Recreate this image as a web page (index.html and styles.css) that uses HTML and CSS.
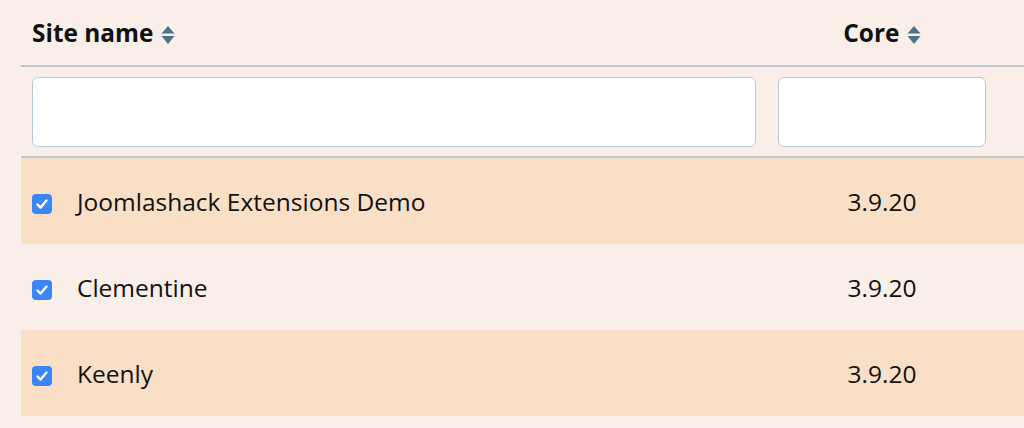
FILE: index.html
```html
<!DOCTYPE html>
<html>
<head>
<meta charset="utf-8">
<link rel="stylesheet" href="styles.css">
</head>
<body>
<div class="wrap">
<table class="sites">
  <colgroup>
    <col class="c-name">
    <col class="c-core">
    <col class="c-rest">
  </colgroup>
  <thead>
    <tr class="head">
      <th class="th-name">Site name <svg class="sort" viewBox="0 0 14 18" width="14" height="18"><path d="M7 0 L13.5 7.5 H0.5 Z M0.5 10 H13.5 L7 18 Z" fill="#4b7587"/></svg></th>
      <th class="th-core">Core <svg class="sort" viewBox="0 0 14 18" width="14" height="18"><path d="M7 0 L13.5 7.5 H0.5 Z M0.5 10 H13.5 L7 18 Z" fill="#4b7587"/></svg></th>
      <th></th>
    </tr>
    <tr class="filters">
      <th><input class="filter filter-name" type="text"></th>
      <th><input class="filter filter-core" type="text"></th>
      <th></th>
    </tr>
  </thead>
  <tbody>
    <tr class="odd">
      <td class="name"><span class="cb"><svg viewBox="0 0 20 20" width="20" height="20"><path d="M5.5 10.5 L8.6 13.6 L14.5 6.6" fill="none" stroke="#fff" stroke-width="2.4" stroke-linecap="round" stroke-linejoin="round"/></svg></span>Joomlashack Extensions Demo</td>
      <td class="core">3.9.20</td>
      <td></td>
    </tr>
    <tr>
      <td class="name"><span class="cb"><svg viewBox="0 0 20 20" width="20" height="20"><path d="M5.5 10.5 L8.6 13.6 L14.5 6.6" fill="none" stroke="#fff" stroke-width="2.4" stroke-linecap="round" stroke-linejoin="round"/></svg></span>Clementine</td>
      <td class="core">3.9.20</td>
      <td></td>
    </tr>
    <tr class="odd">
      <td class="name"><span class="cb"><svg viewBox="0 0 20 20" width="20" height="20"><path d="M5.5 10.5 L8.6 13.6 L14.5 6.6" fill="none" stroke="#fff" stroke-width="2.4" stroke-linecap="round" stroke-linejoin="round"/></svg></span>Keenly</td>
      <td class="core">3.9.20</td>
      <td></td>
    </tr>
  </tbody>
</table>
</div>
</body>
</html>
```
FILE: styles.css
```css
html, body {
  margin: 0;
  padding: 0;
  background: #f9eee8;
  overflow: hidden;
}
body {
  font-family: "Open Sans", "Noto Sans", sans-serif;
  color: #111;
}
.wrap {
  padding-left: 21px;
}
.sites {
  border-collapse: collapse;
  width: 100%;
  table-layout: fixed;
}
.c-name { width: 746px; }
.c-core { width: 230px; }
.head th {
  height: 65px;
  padding: 0 11px;
  font-size: 24.4px;
  font-weight: 700;
  vertical-align: middle;
  border-bottom: 2px solid #b9cad3;
}
.th-name { text-align: left; }
.th-core { text-align: center; }
.sort {
  vertical-align: -2px;
  margin-left: 1px;
}
.filters th {
  padding: 10px 11px 9px;
  border-bottom: 2px solid #b9cad3;
}
.filter {
  display: block;
  box-sizing: border-box;
  width: 100%;
  height: 70px;
  border: 1.5px solid #b7cad4;
  border-radius: 6px;
  background: #fff;
  margin: 0;
}
tbody td {
  height: 86px;
  padding: 0 11px;
  font-size: 24.5px;
  vertical-align: middle;
}
tbody tr.odd td { background: #f9dfc5; }
.name { text-align: left; }
.core { text-align: center; }
.cb {
  display: inline-block;
  width: 20px;
  height: 20px;
  border-radius: 4px;
  background: #3a86f5;
  vertical-align: -3px;
  margin-right: 25px;
}
.cb svg { display: block; }
```
